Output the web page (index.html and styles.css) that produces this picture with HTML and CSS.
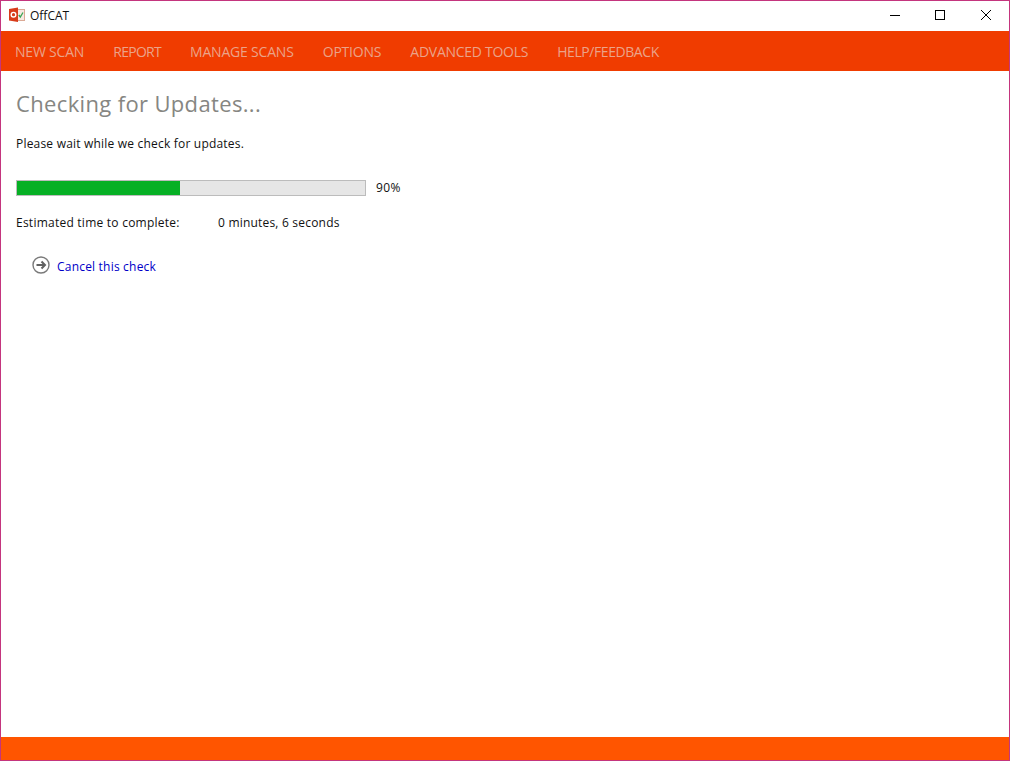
FILE: index.html
```html
<!DOCTYPE html>
<html lang="en">
<head>
<meta charset="utf-8">
<title>OffCAT</title>
<link rel="stylesheet" href="styles.css">
</head>
<body>
<div class="window">
  <header class="titlebar">
    <div class="app">
      <svg class="logo" width="16" height="16" viewBox="0 0 16 16">
        <rect x="5.5" y="2.5" width="10" height="11" fill="#f8e8e2" stroke="#dba995" stroke-width="1"/>
        <path d="M0 2 L9 0.5 V15 L0 13.5 Z" fill="#d83b1a"/>
        <circle cx="4.5" cy="7.7" r="2.3" fill="none" stroke="#fff" stroke-width="1.4"/>
        <path d="M9.8 8 L11.3 10 L14 5.5" fill="none" stroke="#3aa655" stroke-width="1.3"/>
      </svg>
      <span class="app-name">OffCAT</span>
    </div>
    <div class="controls">
      <svg class="ctl" width="46" height="30" viewBox="0 0 46 30"><path d="M19 14.5H29" stroke="#000" fill="none"/></svg>
      <svg class="ctl" width="46" height="30" viewBox="0 0 46 30"><rect x="18.5" y="9.5" width="9" height="9" stroke="#000" fill="none"/></svg>
      <svg class="ctl" width="46" height="30" viewBox="0 0 46 30"><path d="M18 9L28 19M28 9L18 19" stroke="#000" fill="none"/></svg>
    </div>
  </header>
  <nav class="nav">
    <a class="nav-item">NEW SCAN</a>
    <a class="nav-item nav-item-report">REPORT</a>
    <a class="nav-item">MANAGE SCANS</a>
    <a class="nav-item">OPTIONS</a>
    <a class="nav-item nav-item-tools">ADVANCED TOOLS</a>
    <a class="nav-item nav-item-help">HELP/FEEDBACK</a>
  </nav>
  <main class="content">
    <h1 class="heading">Checking for Updates...</h1>
    <p class="intro">Please wait while we check for updates.</p>
    <div class="progress-row">
      <div class="progress"><div class="progress-fill"></div></div>
      <span class="percent">90%</span>
    </div>
    <div class="eta">
      <span class="eta-label">Estimated time to complete:</span>
      <span>0 minutes, 6 seconds</span>
    </div>
    <div class="cancel">
      <svg width="18" height="18" viewBox="0 0 18 18">
        <circle cx="9" cy="9" r="8" fill="#fff" stroke="#7a7a7a" stroke-width="1.4"/>
        <path d="M4.5 9H12.5M9.5 5.5L13 9L9.5 12.5" fill="none" stroke="#606060" stroke-width="2"/>
      </svg>
      <a class="cancel-link">Cancel this check</a>
    </div>
  </main>
  <footer class="footer"></footer>
</div>
</body>
</html>
```
FILE: styles.css
```css
html, body {
  margin: 0;
  padding: 0;
  height: 100%;
  background: #fff;
}
.window {
  box-sizing: border-box;
  width: 1010px;
  height: 761px;
  border: 1px solid #c4357e;
  display: flex;
  flex-direction: column;
  font-family: "Open Sans", "Noto Sans", sans-serif;
  font-size: 12px;
  letter-spacing: 0.2px;
  color: #111;
  overflow: hidden;
}
.titlebar {
  height: 30px;
  display: flex;
  justify-content: space-between;
  align-items: center;
  background: #fff;
}
.app {
  display: flex;
  align-items: center;
  gap: 5px;
  padding: 0 0 2px 8px;
}
.logo { display: block; }
.app-name { font-size: 12px; color: #111; letter-spacing: 0; }
.controls { display: flex; }
.ctl { display: block; }
.nav {
  height: 40px;
  background: #f03c00;
  display: flex;
  align-items: center;
  gap: 29px;
  padding-left: 14px;
}
.nav-item {
  font-size: 14px;
  color: #eba389;
  letter-spacing: -0.2px;
}
.nav-item-report { letter-spacing: -0.7px; }
.nav-item-tools { letter-spacing: -0.27px; }
.nav-item-help { letter-spacing: -0.43px; }
.content {
  flex: 1;
  padding: 0 15px;
  background: #fff;
}
.heading {
  margin: 17px 0 0;
  font-size: 22px;
  line-height: 30px;
  font-weight: 400;
  color: #868682;
  letter-spacing: 0.35px;
}
.intro {
  margin: 17px 0 0;
  line-height: 18px;
}
.progress-row {
  display: flex;
  align-items: center;
  gap: 10px;
  margin-top: 27px;
}
.progress {
  box-sizing: border-box;
  width: 350px;
  height: 16px;
  border: 1px solid #bcbcbc;
  background: #e6e6e6;
}
.progress-fill {
  width: 163px;
  height: 100%;
  background: #06b025;
}
.percent { line-height: 16px; letter-spacing: 0.4px; }
.eta {
  display: flex;
  margin-top: 18px;
  line-height: 18px;
}
.eta-label { width: 202px; letter-spacing: 0.24px; }
.cancel {
  display: flex;
  align-items: flex-start;
  gap: 7px;
  margin: 24px 0 0 16px;
}
.cancel svg { display: block; }
.cancel-link { color: #0000c8; line-height: 18px; margin-top: 2px; }
.footer {
  height: 23px;
  background: #ff5500;
}
```
